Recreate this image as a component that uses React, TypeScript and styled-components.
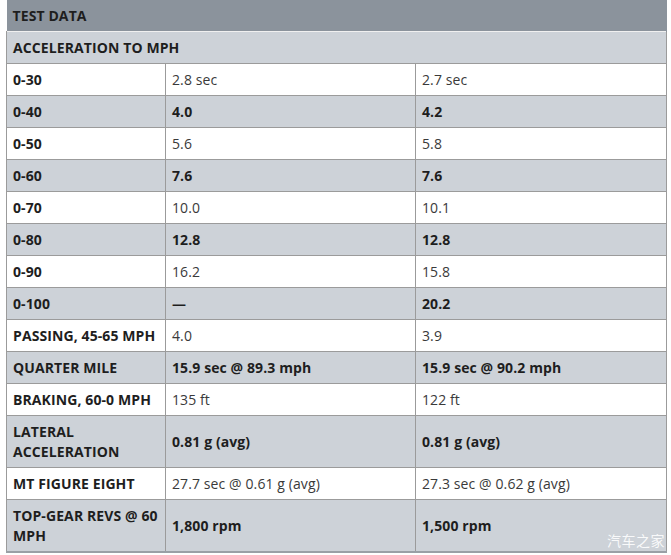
import React from "react";
import styled, { createGlobalStyle } from "styled-components";

const GlobalStyle = createGlobalStyle`
  body {
    margin: 0;
    background: #ffffff;
    font-family: "Open Sans", "Noto Sans CJK SC", sans-serif;
  }
`;

const Page = styled.div`
  position: relative;
  width: 671px;
  height: 555px;
  padding-left: 6px;
  box-sizing: border-box;
  overflow: hidden;
`;

const Table = styled.table`
  width: 660px;
  border-collapse: collapse;
  table-layout: fixed;
  color: #1e1e1e;
  font-size: 14px;
  line-height: 20px;
  letter-spacing: 0.1px;
  border-bottom: 2px solid #9aa0a6;
`;

const TitleCell = styled.th`
  background: #8b939c;
  text-align: left;
  font-weight: 700;
  padding: 6px 6px 5px;
  border-right: 1px solid #8b939c;
`;

const GroupCell = styled.th`
  background: #cdd2d8;
  text-align: left;
  font-weight: 700;
  padding: 6px 6px 5px;
  border: 1px solid #9b9b9b;
  border-top: 1px solid #f0f0f0;
`;

const Row = styled.tr<{ $shade: boolean; $tall: boolean }>`
  background: ${(p) => (p.$shade ? "#cdd2d8" : "#ffffff")};
  height: ${(p) => (p.$tall ? "52px" : "auto")};
`;

const Label = styled.td`
  font-weight: 700;
  padding: 6px 6px 5px;
  border: 1px solid #9b9b9b;
  vertical-align: middle;
`;

const Value = styled.td<{ $bold: boolean }>`
  font-weight: ${(p) => (p.$bold ? 700 : 400)};
  color: ${(p) => (p.$bold ? "#1e1e1e" : "#3a3a3a")};
  padding: 6px 6px 5px;
  border: 1px solid #9b9b9b;
  vertical-align: middle;
`;

const Watermark = styled.div`
  position: absolute;
  right: 6px;
  bottom: 5px;
  color: rgba(255, 255, 255, 0.9);
  font-family: "Noto Sans CJK SC", sans-serif;
  font-size: 14px;
  letter-spacing: 0.5px;
`;

type Item = { label: string; a: string; b: string; shade: boolean; bold: boolean; tall?: boolean };

const rows: Item[] = [
  { label: "0-30", a: "2.8 sec", b: "2.7 sec", shade: false, bold: false },
  { label: "0-40", a: "4.0", b: "4.2", shade: true, bold: true },
  { label: "0-50", a: "5.6", b: "5.8", shade: false, bold: false },
  { label: "0-60", a: "7.6", b: "7.6", shade: true, bold: true },
  { label: "0-70", a: "10.0", b: "10.1", shade: false, bold: false },
  { label: "0-80", a: "12.8", b: "12.8", shade: true, bold: true },
  { label: "0-90", a: "16.2", b: "15.8", shade: false, bold: false },
  { label: "0-100", a: "—", b: "20.2", shade: true, bold: true },
  { label: "PASSING, 45-65 MPH", a: "4.0", b: "3.9", shade: false, bold: false },
  { label: "QUARTER MILE", a: "15.9 sec @ 89.3 mph", b: "15.9 sec @ 90.2 mph", shade: true, bold: true },
  { label: "BRAKING, 60-0 MPH", a: "135 ft", b: "122 ft", shade: false, bold: false },
  { label: "LATERAL ACCELERATION", a: "0.81 g (avg)", b: "0.81 g (avg)", shade: true, bold: true, tall: true },
  { label: "MT FIGURE EIGHT", a: "27.7 sec @ 0.61 g (avg)", b: "27.3 sec @ 0.62 g (avg)", shade: false, bold: false },
  { label: "TOP-GEAR REVS @ 60 MPH", a: "1,800 rpm", b: "1,500 rpm", shade: true, bold: true, tall: true },
];

export default function App() {
  return (
    <Page>
      <GlobalStyle />
      <Table>
        <colgroup>
          <col style={{ width: 159 }} />
          <col style={{ width: 250 }} />
          <col style={{ width: 251 }} />
        </colgroup>
        <thead>
          <tr>
            <TitleCell colSpan={3}>TEST DATA</TitleCell>
          </tr>
        </thead>
        <tbody>
          <tr>
            <GroupCell colSpan={3}>ACCELERATION TO MPH</GroupCell>
          </tr>
          {rows.map((r) => (
            <Row key={r.label} $shade={r.shade} $tall={!!r.tall}>
              <Label>{r.label}</Label>
              <Value $bold={r.bold}>{r.a}</Value>
              <Value $bold={r.bold}>{r.b}</Value>
            </Row>
          ))}
        </tbody>
      </Table>
      <Watermark>汽车之家</Watermark>
    </Page>
  );
}
